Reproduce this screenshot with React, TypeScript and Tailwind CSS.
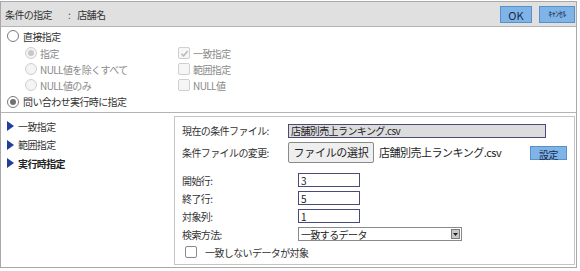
import React from 'react';

const font = { fontFamily: '"Noto Sans CJK JP", "Noto Sans", sans-serif' };

function Radio({ checked, disabled }: { checked?: boolean; disabled?: boolean }) {
  return (
    <span className={`flex h-[12px] w-[12px] shrink-0 items-center justify-center rounded-full border ${disabled ? 'border-[#cfcfcf] bg-[#f4f4f4]' : 'border-[#7a7a7a] bg-white'}`}>
      {checked && <span className={`h-[6px] w-[6px] rounded-full ${disabled ? 'bg-[#c8c8c8]' : 'bg-[#707070]'}`} />}
    </span>
  );
}

function Check({ checked, disabled }: { checked?: boolean; disabled?: boolean }) {
  return (
    <span className={`flex h-[12px] w-[12px] shrink-0 items-center justify-center rounded-[2px] border ${disabled ? 'border-[#cfcfcf] bg-[#f6f6f6]' : 'border-[#8a8a8a] bg-white'}`}>
      {checked && (
        <svg width="9" height="9" viewBox="0 0 10 10">
          <path d="M1.5 5.2 L4 7.6 L8.6 2.2" fill="none" stroke="#b8b8b8" strokeWidth="1.6" />
        </svg>
      )}
    </span>
  );
}

function Tri() {
  return (
    <svg width="7" height="10" viewBox="0 0 7 10">
      <path d="M0 0 L7 5 L0 10 Z" fill="#1f3f9a" />
    </svg>
  );
}

function NumInput({ value }: { value: string }) {
  return (
    <div className="flex h-[14px] w-[62px] items-center border border-[#4a4a7a] bg-white pl-[2px] text-[10px] text-[#222]">{value}</div>
  );
}

export default function App() {
  return (
    <div className="h-[271px] w-[580px] bg-white pt-[1px] text-[10px] tracking-[-0.6px] text-[#333]" style={font}>
      <div className="flex h-[267px] w-[577px] flex-col border border-[#a8a8a8]">
        {/* header */}
        <div className="flex h-[25px] shrink-0 items-center border-b border-[#b4b4b4] bg-[#e0e0e0] pl-[4px] pr-[1px]">
          <span className="w-[63px]">条件の指定</span>
          <span className="text-[#555]">:</span>
          <span className="ml-[7px]">店舗名</span>
          <button className="ml-auto h-[17px] w-[32px] border border-[#5a8fc8] bg-[#7fb4e8] text-[11px] tracking-normal text-[#1a2a4a]">OK</button>
          <button className="ml-[7px] h-[17px] w-[36px] border border-[#5a8fc8] bg-[#7fb4e8] text-[8px] tracking-[-0.5px] text-[#1a2a4a]">ｷｬﾝｾﾙ</button>
        </div>

        {/* section 1 */}
        <div className="h-[86px] shrink-0 border-b border-[#b4b4b4] pl-[6px]">
          <div className="flex h-[17px] items-center gap-[4px] pt-[1px]">
            <Radio />
            <span>直接指定</span>
          </div>
          <div className="flex pl-[18px] text-[#8a8a8a]">
            <div className="w-[153px]">
              <div className="mt-[1px] flex h-[16px] items-center gap-[3px]"><Radio checked disabled /><span>指定</span></div>
              <div className="flex h-[16px] items-center gap-[3px]"><Radio disabled /><span>NULL値を除くすべて</span></div>
              <div className="flex h-[16px] items-center gap-[3px]"><Radio disabled /><span>NULL値のみ</span></div>
            </div>
            <div>
              <div className="mt-[1px] flex h-[16px] items-center gap-[3px]"><Check checked disabled /><span>一致指定</span></div>
              <div className="flex h-[16px] items-center gap-[3px]"><Check disabled /><span>範囲指定</span></div>
              <div className="flex h-[16px] items-center gap-[3px]"><Check disabled /><span>NULL値</span></div>
            </div>
          </div>
          <div className="flex h-[17px] items-center gap-[4px]">
            <Radio checked />
            <span>問い合わせ実行時に指定</span>
          </div>
        </div>

        {/* section 2 */}
        <div className="flex flex-1 pb-[2px]">
          <div className="w-[173px] shrink-0 pl-[6px] pt-[4px]">
            <div className="flex h-[18px] items-center gap-[4px]"><Tri /><span>一致指定</span></div>
            <div className="flex h-[19px] items-center gap-[4px]"><Tri /><span>範囲指定</span></div>
            <div className="flex h-[18px] items-center gap-[4px] font-bold text-[#222]"><Tri /><span>実行時指定</span></div>
          </div>
          <div className="mr-[1px] mt-[3px] flex-1 border border-[#c4c4c4] pl-[7px] pt-[6px]">
            <div className="flex h-[15px] items-center">
              <span className="w-[106px]">現在の条件ファイル:</span>
              <div className="flex h-[14px] w-[258px] items-center border border-[#4a4a7a] bg-[#dcdcdc] pl-[2px] text-[10px] text-[#222]">店舗別売上ランキング.csv</div>
            </div>
            <div className="mt-[4px] flex h-[21px] items-center">
              <span className="w-[106px]">条件ファイルの変更:</span>
              <button className="h-[21px] w-[86px] rounded-[2px] border border-[#8a8a8a] bg-[#efefef] text-[11px] tracking-[-0.3px] text-[#222]">ファイルの選択</button>
              <span className="ml-[5px] text-[11px] tracking-[-0.5px] text-[#222]">店舗別売上ランキング.csv</span>
              <button className="ml-auto mr-[7px] h-[14px] w-[37px] border border-[#5a8fc8] bg-[#7fb4e8] text-[10px] text-[#1a2a4a]">設定</button>
            </div>
            <div className="mt-[10px] flex h-[14px] items-center">
              <span className="w-[116px]">開始行:</span>
              <NumInput value="3" />
            </div>
            <div className="mt-[4px] flex h-[14px] items-center">
              <span className="w-[116px]">終了行:</span>
              <NumInput value="5" />
            </div>
            <div className="mt-[4px] flex h-[14px] items-center">
              <span className="w-[116px]">対象列:</span>
              <NumInput value="1" />
            </div>
            <div className="mt-[4px] flex h-[14px] items-center">
              <span className="w-[116px]">検索方法:</span>
              <div className="flex h-[14px] w-[164px] items-center border border-[#8a8a8a] bg-white pl-[2px] text-[10px] text-[#222]">
                <span>一致するデータ</span>
                <span className="ml-auto mr-[1px] flex h-[10px] w-[9px] items-center justify-center border border-[#7a7a7a] bg-[#c8c8c8]">
                  <svg width="5" height="3" viewBox="0 0 5 3"><path d="M0 0 L5 0 L2.5 3 Z" fill="#222" /></svg>
                </span>
              </div>
            </div>
            <div className="mt-[4px] flex h-[14px] items-center gap-[8px] pl-[3px]">
              <Check />
              <span>一致しないデータが対象</span>
            </div>
          </div>
        </div>
      </div>
    </div>
  );
}
